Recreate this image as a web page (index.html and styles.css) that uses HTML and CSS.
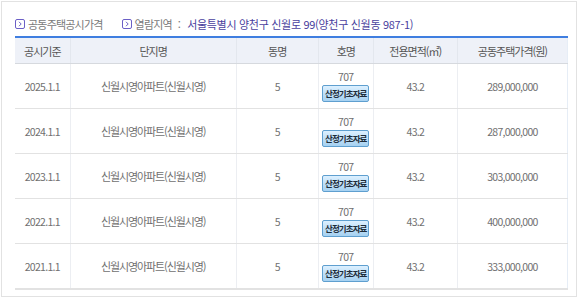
FILE: index.html
```html
<!DOCTYPE html>
<html lang="ko">
<head>
<meta charset="utf-8">
<link rel="stylesheet" href="styles.css">
</head>
<body>
<div class="frame">
  <div class="info">
    <span class="item"><span class="ico"><svg viewBox="0 0 10 10" width="10" height="10"><rect x="0.5" y="0.5" width="9" height="9" rx="1.5" fill="none" stroke="#6b5fc6"/><path d="M4 2.8 L6.2 5 L4 7.2" fill="none" stroke="#6b5fc6" stroke-width="1"/></svg></span><span class="lbl">공동주택공시가격</span></span>
    <span class="item"><span class="ico"><svg viewBox="0 0 10 10" width="10" height="10"><rect x="0.5" y="0.5" width="9" height="9" rx="1.5" fill="none" stroke="#6b5fc6"/><path d="M4 2.8 L6.2 5 L4 7.2" fill="none" stroke="#6b5fc6" stroke-width="1"/></svg></span><span class="lbl">열람지역</span><span class="colon">:</span><span class="val">서울특별시 양천구 신월로 99(양천구 신월동 987-1)</span></span>
  </div>
  <table class="grid">
    <colgroup>
      <col class="c1"><col class="c2"><col class="c3"><col class="c4"><col class="c5"><col class="c6">
    </colgroup>
    <thead>
      <tr><th>공시기준</th><th>단지명</th><th>동명</th><th>호명</th><th>전용면적(㎡)</th><th>공동주택가격(원)</th></tr>
    </thead>
    <tbody>
      <tr><td>2025.1.1</td><td class="kr">신월시영아파트(신월시영)</td><td>5</td><td><div class="ho">707</div><span class="btn">산정기초자료</span></td><td>43.2</td><td>289,000,000</td></tr>
      <tr><td>2024.1.1</td><td class="kr">신월시영아파트(신월시영)</td><td>5</td><td><div class="ho">707</div><span class="btn">산정기초자료</span></td><td>43.2</td><td>287,000,000</td></tr>
      <tr><td>2023.1.1</td><td class="kr">신월시영아파트(신월시영)</td><td>5</td><td><div class="ho">707</div><span class="btn">산정기초자료</span></td><td>43.2</td><td>303,000,000</td></tr>
      <tr><td>2022.1.1</td><td class="kr">신월시영아파트(신월시영)</td><td>5</td><td><div class="ho">707</div><span class="btn">산정기초자료</span></td><td>43.2</td><td>400,000,000</td></tr>
      <tr><td>2021.1.1</td><td class="kr">신월시영아파트(신월시영)</td><td>5</td><td><div class="ho">707</div><span class="btn">산정기초자료</span></td><td>43.2</td><td>333,000,000</td></tr>
    </tbody>
  </table>
</div>
</body>
</html>
```
FILE: styles.css
```css
html, body {
  margin: 0;
  padding: 0;
  background: #fff;
}
body {
  font-family: "Noto Sans CJK KR", "Noto Sans", sans-serif;
  color: #666;
}
.frame {
  margin: 1px 0 0 1px;
  width: 561px;
  height: 294px;
  border: 1px solid #e2e2e2;
  padding: 0 0 0 13px;
  overflow: hidden;
}
.info {
  height: 20px;
  margin-top: 12px;
  margin-bottom: 2px;
  display: flex;
  align-items: center;
  gap: 19px;
  font-size: 11px;
  letter-spacing: -0.8px;
  line-height: 20px;
}
.item {
  display: flex;
  align-items: center;
}
.ico {
  display: inline-flex;
  width: 10px;
  height: 10px;
  margin-right: 3px;
}
.lbl {
  color: #7a7a7a;
  white-space: pre;
}
.colon {
  color: #7a7a7a;
  margin: 0 7px 0 6px;
}
.val {
  color: #4a3f9e;
  letter-spacing: -0.3px;
}
.grid {
  width: 553px;
  border-collapse: collapse;
  table-layout: fixed;
  border-top: 2px solid #3f7ee0;
  border-right: 1px solid #e6edf6;
}
.c1 { width: 55px; }
.c2 { width: 166px; }
.c3 { width: 82px; }
.c4 { width: 55px; }
.c5 { width: 84px; }
.c6 { width: 110px; }
th {
  height: 25px;
  padding: 0;
  background: #eef1f8;
  border-bottom: 1px solid #d6d9de;
  border-left: 1px solid #e3e7ee;
  font-weight: 400;
  font-size: 11px;
  letter-spacing: -1px;
  color: #555;
  text-align: center;
}
th:first-child, td:first-child { border-left: none; }
td {
  height: 44px;
  padding: 0;
  border-bottom: 1px solid #e2e2e2;
  border-left: 1px solid #eceef2;
  text-align: center;
  vertical-align: middle;
  font-size: 10.5px;
  letter-spacing: -0.7px;
  color: #707070;
}
td.kr {
  letter-spacing: -1.1px;
  font-size: 11px;
}
tbody tr:last-child td {
  border-bottom: 2px solid #e2e2e2;
}
.ho {
  line-height: 12px;
  margin-top: 1px;
}
.btn {
  display: inline-block;
  width: 45px;
  height: 15px;
  margin-top: 2px;
  border: 1px solid #5f9fcf;
  border-radius: 2px;
  background: linear-gradient(#dcf0ff, #a6d1f1);
  color: #1d2c3a;
  font-size: 8.5px;
  font-weight: 700;
  letter-spacing: -0.9px;
  line-height: 15px;
  text-align: center;
}
```
